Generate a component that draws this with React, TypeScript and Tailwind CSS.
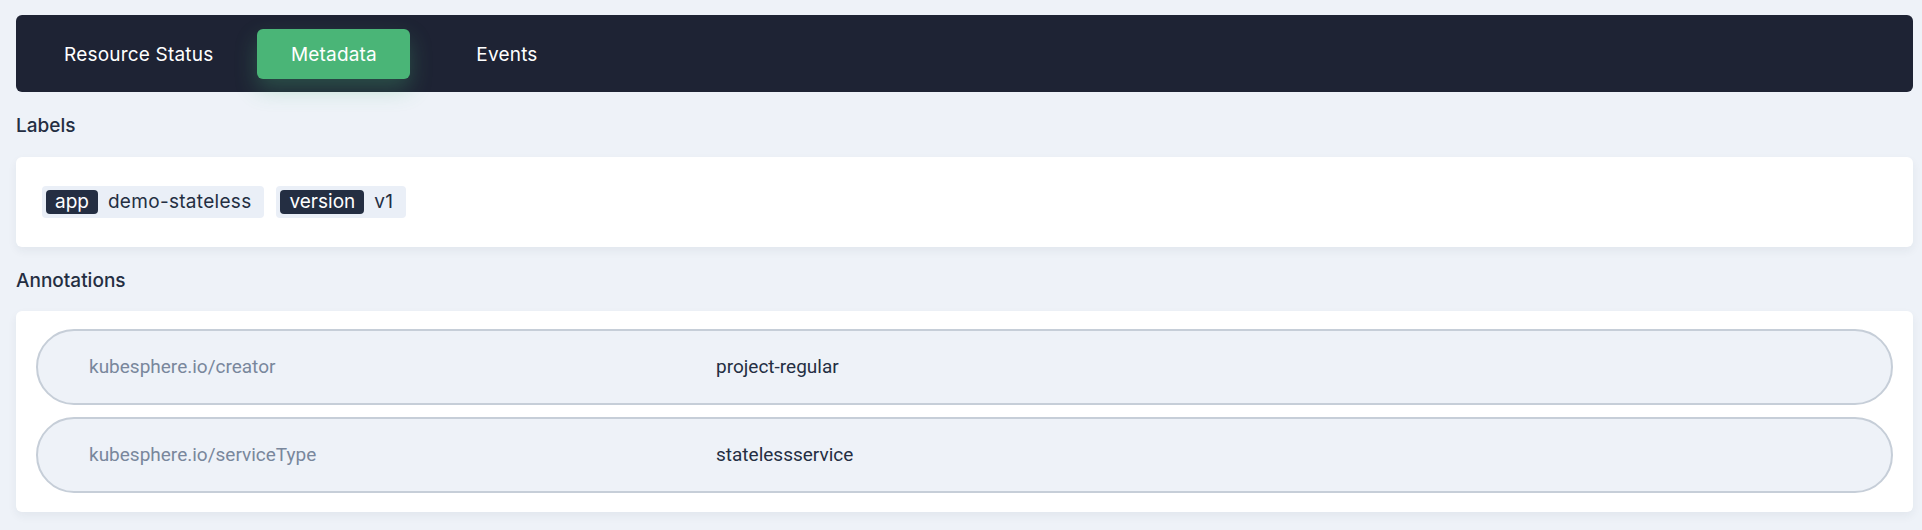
import React from 'react'

const tabs = ['Resource Status', 'Metadata', 'Events']

const labels = [
  { k: 'app', v: 'demo-stateless' },
  { k: 'version', v: 'v1' },
]

const annotations = [
  { k: 'kubesphere.io/creator', v: 'project-regular' },
  { k: 'kubesphere.io/serviceType', v: 'statelessservice' },
]

const App: React.FC = () => {
  return (
    <div className="w-[1922px] h-[530px] bg-[#eef2f8] pl-4 pr-[9px] pt-[15px] font-['Inter',sans-serif] text-[#242e42]">
      {/* Tabs */}
      <div className="h-[77px] rounded-md bg-[#1e2334] flex items-center pl-6 gap-5">
        {tabs.map((t) => (
          <div
            key={t}
            className={
              t === 'Metadata'
                ? 'min-w-[153px] h-[50px] px-6 pt-1 rounded-md flex items-center justify-center text-[19px] tracking-[0.2px] text-white bg-[#4ab577] shadow-[0_10px_22px_rgba(74,181,119,0.3)]'
                : 'min-w-[153px] h-[50px] px-6 pt-1 rounded-md flex items-center justify-center text-[19px] tracking-[0.2px] text-white'
            }
          >
            {t}
          </div>
        ))}
      </div>

      {/* Labels */}
      <div className="mt-[22px] h-6 leading-6 text-[19px] font-medium">Labels</div>
      <div className="mt-[19px] h-[90px] rounded-md bg-white shadow-[0_4px_10px_rgba(36,46,66,0.06)] flex items-center gap-3 px-[26px]">
        {labels.map((l) => (
          <div key={l.k} className="h-8 rounded bg-[#eaeff7] flex items-center p-1 text-[19px]">
            <span className="h-6 leading-6 px-[9px] bg-[#242e42] text-white rounded-sm">{l.k}</span>
            <span className="pl-[10px] pr-[9px] tracking-[0.3px]">{l.v}</span>
          </div>
        ))}
      </div>

      {/* Annotations */}
      <div className="mt-[22px] h-6 leading-6 text-[19px] font-medium">Annotations</div>
      <div className="mt-[18px] rounded-md bg-white shadow-[0_4px_10px_rgba(36,46,66,0.06)] px-5 pt-[18px] pb-[19px] flex flex-col gap-3">
        {annotations.map((a) => (
          <div key={a.k} className="h-[76px] rounded-full border-2 border-[#c6ced8] bg-[#eef2f8] flex items-center pl-[51px] font-['Roboto',sans-serif] text-[19px]">
            <span className="w-[627px] text-[#79879c]">{a.k}</span>
            <span className="text-[#242e42]">{a.v}</span>
          </div>
        ))}
      </div>
    </div>
  )
}

export default App
